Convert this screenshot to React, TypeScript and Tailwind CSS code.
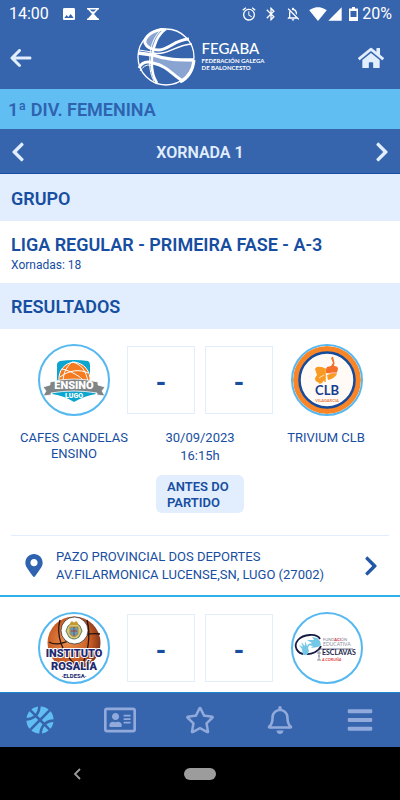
import type { ReactNode } from "react";
import {
  FaBars,
  FaBasketballBall,
  FaChevronLeft,
  FaChevronRight,
  FaHome,
  FaMapMarkerAlt,
  FaRegAddressCard,
  FaRegBell,
  FaRegStar,
} from "react-icons/fa";
import { FaArrowLeft } from "react-icons/fa6";
import {
  MdAlarm,
  MdBluetooth,
  MdImage,
  MdOutlineNotificationsOff,
  MdSignalCellular4Bar,
  MdSignalWifi4Bar,
} from "react-icons/md";

type Equipo = {
  nome: string;
  escudo: ReactNode;
};

type Partido = {
  id: number;
  local: Equipo;
  visitante: Equipo;
  data: string;
  hora: string;
  estado: string;
  pavillon: string;
  enderezo: string;
};

function FegabaLogo() {
  return (
    <div className="flex items-start gap-1.5" role="img" aria-label="FEGABA">
      <svg viewBox="0 2 60 60" className="h-[60px] w-[60px]" fill="none" stroke="#fff">
        <path d="M10 15C13 8 19 4 27 2C23 8 20 15 19 23C14 22 10 19 10 15Z" fill="#8aa4d2" stroke="none" />
        <path d="M17 30C28 34 43 36 57 35C57 44 52 53 44 56C38 46 30 38 17 37Z" fill="#8aa4d2" stroke="none" />
        <circle cx="30" cy="31" r="28" strokeWidth="1.3" />
        <path d="M28 3C14 5 8 12 9 17C11 22 17 24 23 24C34 23 38 14 53 13" strokeWidth="3" />
        <path d="M17 27C31 30 39 19 56 18" strokeWidth="1.5" />
        <path d="M30 3C22 8 17 20 16 31C15 42 17 51 21 57" strokeWidth="2.6" />
        <path d="M26 3C19 9 15 18 14 28C13 40 14 48 18 55" strokeWidth="1" />
        <path d="M2 27L17 29C31 34 42 34 58 34" strokeWidth="3.4" />
        <path d="M3 24L16 26" strokeWidth="1" />
        <path d="M3 42C6 36 11 35 17 37C32 40 37 50 47 55" strokeWidth="3" />
        <path d="M4 45C8 39 12 38 16 40" strokeWidth="1" />
        <path d="M44 56C52 52 57 44 58 34" strokeWidth="3" />
      </svg>
      <div className="pt-[11px] font-['Lato'] text-white">
        <p className="text-[15px] leading-[18px] font-medium">FEGABA</p>
        <p className="text-[6px] leading-[7px] font-bold">
          FEDERACIÓN GALEGA
          <br />
          DE BALONCESTO
        </p>
      </div>
    </div>
  );
}

function EscudoEnsino() {
  return (
    <svg viewBox="2 2 68 68" className="h-full w-full" role="img" aria-label="Ensino Lugo">
      <path d="M22 17Q36 15 50 17Q52 18 52 21V42L58 50Q46 52 36 58Q27 52 14 50L19 42V21Q19 18 22 17Z" fill="#0ba5cf" />
      <path d="M21 37C20 26 27 19 36 18C46 19 53 27 52 38Z" fill="#f47b20" stroke="#fff" />
      <path d="M24 25C33 27 42 32 47 38M22 33C31 26 42 25 50 29M34 18C27 24 25 31 25 39M34 18C43 20 48 26 50 38" fill="none" stroke="#fff" />
      <path d="M5 43L12 41V38Q36 32 60 38V41L67 43L64 47L67 52L59 51V49Q36 45 13 49V51L5 52L8 47Z" fill="#7f8587" stroke="#fff" strokeWidth=".8" />
      <text x="36" y="45" textAnchor="middle" className="fill-white font-['Roboto'] text-[11px] font-black">ENSINO</text>
      <text x="36" y="54" textAnchor="middle" className="fill-white font-['Roboto'] text-[7px] font-black">LUGO</text>
    </svg>
  );
}

function EscudoClb() {
  return (
    <svg viewBox="2 2 68 68" className="h-full w-full" role="img" aria-label="CLB Vilagarcía">
      <circle cx="36" cy="36" r="31" fill="#fffaf6" stroke="#fa8526" strokeWidth="6" />
      <circle cx="36" cy="36" r="27.500" fill="none" stroke="#164b9c" strokeWidth="2.500" />
      <path d="M40 22L42 19L40 14L42 12.500L43.500 19L43 22Q47 22 47 25L45.500 30Q40 31 35 29Q34 26 36 23Z" fill="#f4702a" />
      <path d="M24 25Q25 22 30 23Q34 23 34 27V35L31 39Q28 41 27 38Q24 38 24 34L26 31Z" fill="#f99a22" />
      <path d="M36 31Q40 29 46 30Q43 35 37 36Z" fill="#f99a22" />
      <path d="M28 34Q36 28 47 29" fill="none" stroke="#fff" strokeWidth=".7" />
      <path d="M34 24V38" stroke="#f99a22" strokeWidth="1.500" />
      <text x="36" y="51" textAnchor="middle" className="fill-[#173d90] font-['Lato'] text-[13px] font-bold">CLB</text>
      <text x="36" y="58" textAnchor="middle" className="fill-[#e97a3e] font-['Lato'] text-[4px] font-bold">VILAGARCIA</text>
    </svg>
  );
}

function EscudoRosalia() {
  return (
    <svg viewBox="2 2 68 68" className="h-full w-full" role="img" aria-label="Instituto Rosalía">
      <defs>
        <radialGradient id="balon" cx="40%" cy="45%" r="60%">
          <stop offset="0" stopColor="#ee9150" />
          <stop offset=".7" stopColor="#c65b23" />
          <stop offset="1" stopColor="#83361a" />
        </radialGradient>
      </defs>
      <circle cx="36" cy="31" r="26.500" fill="url(#balon)" />
      <path d="M22 8C18 22 23 41 39 54M11 30C24 38 40 19 62 22M49 8C53 24 50 41 44 53" fill="none" stroke="#24140f" strokeWidth="1.300" />
      <circle cx="36.500" cy="18.500" r="13.500" fill="#fff" stroke="#222" strokeWidth=".7" />
      <path d="M30 14Q36 8 42 14L44 19L41 25Q36 29 31 25L28 19Z" fill="#d6c77d" stroke="#5d7b55" />
      <path d="M32 15H40V22Q36 27 32 22Z" fill="#5e9dc6" stroke="#b18b2c" />
      <path d="M32 11L34 9L36 11L38 9L40 11V13H32Z" fill="#c49a31" />
      <path d="M36 15V24M33 19H39" stroke="#a34236" />
      <text x="36" y="45" textAnchor="middle" stroke="#fff" strokeWidth="2" paintOrder="stroke" className="fill-[#20296f] font-['Roboto'] text-[11px] font-black">INSTITUTO</text>
      <text x="36" y="58" textAnchor="middle" stroke="#fff" strokeWidth="2" paintOrder="stroke" className="fill-[#20296f] font-['Roboto'] text-[11px] font-black">ROSALÍA</text>
      <text x="36" y="66" textAnchor="middle" className="fill-[#20296f] font-['Roboto'] text-[6px] font-bold">·ELDESA·</text>
    </svg>
  );
}

function EscudoEsclavas() {
  return (
    <svg viewBox="2 2 68 68" className="h-full w-full" role="img" aria-label="Fundación Educativa Esclavas">
      <path d="M29 27C26 21 12 22 7 28C2 34 6 42 14 42C21 43 28 39 30 34" fill="none" stroke="#171c42" strokeWidth="1.800" />
      <path d="M12 43L11 37L8 33L12 35L10 30L14 34L14 29L16 34L19 31L17 36L18 39L16 43Z" fill="#74c8e5" />
      <path d="M29 29L26 26L21 25L23 28L16 28L21 31L16 33L22 34L20 36L27 35L30 33Z" fill="#74c8e5" />
      <path d="M28 38V48M26 41H30M27 44H29M26 48H30" stroke="#8b90a2" fill="none" />
      <path d="M27 37H62" stroke="#30345a" strokeWidth=".7" />
      <text x="32" y="29" className="fill-[#77798a] font-['Lato'] text-[4px]">
        FUND<tspan className="fill-[#d82739] font-bold">ACI</tspan>ÓN
      </text>
      <text x="32" y="34" className="fill-[#8b8e9c] font-['Lato'] text-[5px]">EDUCATIVA</text>
      <text x="31" y="43" className="fill-[#22264b] font-['Lato'] text-[7px] font-bold">ESCLAVAS</text>
      <text x="31" y="49" className="fill-[#df423f] font-['Lato'] text-[4px] font-bold italic">A CORUÑA</text>
    </svg>
  );
}

const partidos: Partido[] = [
  {
    id: 1,
    local: { nome: "CAFES CANDELAS ENSINO", escudo: <EscudoEnsino /> },
    visitante: { nome: "TRIVIUM CLB", escudo: <EscudoClb /> },
    data: "30/09/2023",
    hora: "16:15h",
    estado: "ANTES DO PARTIDO",
    pavillon: "PAZO PROVINCIAL DOS DEPORTES",
    enderezo: "AV.FILARMONICA LUCENSE,SN, LUGO (27002)",
  },
];

function Escudo({ children }: { children: ReactNode }) {
  return (
    <div className="h-[72px] w-[72px] justify-self-center overflow-hidden rounded-full border-2 border-[#55b8f0] bg-white">
      {children}
    </div>
  );
}

function Marcador({ local, visitante }: { local: ReactNode; visitante: ReactNode }) {
  return (
    <div className="grid grid-cols-[1fr_auto_1fr] items-center px-5 pt-[15px]">
      <Escudo>{local}</Escudo>
      <div className="flex gap-2.5 text-[26px] font-extrabold">
        <span className="flex h-[68px] w-[68px] items-center justify-center border border-[#e2eefd] pt-1">-</span>
        <span className="flex h-[68px] w-[68px] items-center justify-center border border-[#e2eefd] pt-1">-</span>
      </div>
      <Escudo>{visitante}</Escudo>
    </div>
  );
}

function TarxetaPartido({ partido }: { partido: Partido }) {
  return (
    <article className="border-b-2 border-[#2eb0ea]">
      <Marcador local={partido.local.escudo} visitante={partido.visitante.escudo} />
      <div className="grid grid-cols-3 px-[11px] pt-[13px] text-center text-[13px] leading-4">
        <p className="px-1 pt-px">{partido.local.nome}</p>
        <p className="leading-[18px]">
          {partido.data}
          <br />
          {partido.hora}
        </p>
        <p className="px-1 pt-px">{partido.visitante.nome}</p>
      </div>
      <p className="mx-auto mt-2.5 w-[88px] rounded-md bg-[#e2eefd] pt-1 pb-0.5 pl-[11px] text-[13px] leading-4 font-semibold">
        {partido.estado}
      </p>
      <a href="#pavillon" className="mx-[11px] mt-[22px] flex h-[60px] items-center border-t border-[#e2eefd] pr-2.5 pl-[11px]">
        <FaMapMarkerAlt className="h-[23px] w-6 text-[#2f62af]" />
        <span className="ml-2.5 flex-1 pt-px text-[13px] leading-[18px]">
          {partido.pavillon}
          <br />
          {partido.enderezo}
        </span>
        <FaChevronRight className="h-[22px] w-4 text-[#2457a5]" />
      </a>
    </article>
  );
}

function BarraEstado() {
  return (
    <div className="flex h-7 items-center justify-between pr-2 pl-[9px] text-white">
      <div className="flex items-center">
        <span className="text-base">14:00</span>
        <MdImage className="ml-3 h-4 w-4" />
        <svg viewBox="0 0 12 12" className="ml-2.5 h-3 w-3" fill="none" stroke="currentColor" strokeWidth="1.500">
          <path d="M0 .8H12M0 11.200H12M1.500 1L10.500 11M10.500 1L1.500 11" />
          <path d="M6 6L10.500 11H1.500ZM4 3.500H8L6 6Z" fill="currentColor" stroke="none" />
        </svg>
      </div>
      <div className="flex items-center">
        <MdAlarm className="h-4 w-4" />
        <MdBluetooth className="ml-1.5 h-4 w-4" />
        <MdOutlineNotificationsOff className="ml-1.5 h-4 w-4" />
        <MdSignalWifi4Bar className="ml-2 h-[18px] w-[18px]" />
        <MdSignalCellular4Bar className="h-4 w-4" />
        <svg viewBox="0 0 9 14" className="ml-1.5 h-3.5 w-[9px]">
          <path d="M3 0H6V1.500H9V14H0V1.500H3ZM1.500 4V10H7.500V4Z" fill="currentColor" fillRule="evenodd" />
        </svg>
        <span className="ml-1 text-base">20%</span>
      </div>
    </div>
  );
}

export default function App() {
  return (
    <div className="flex h-screen flex-col bg-white font-['Roboto',sans-serif] text-[#174ea1]">
      <header className="bg-[#3665ae]">
        <BarraEstado />
        <div className="flex h-[61px] items-start justify-between pr-4 pl-2.5 text-[#e2eefd]">
          <button type="button" aria-label="Volver" className="w-[26px] pt-[18px]">
            <FaArrowLeft className="h-6 w-[22px]" />
          </button>
          <div className="pl-1.5">
            <FegabaLogo />
          </div>
          <button type="button" aria-label="Inicio" className="pt-[18px]">
            <FaHome className="h-6 w-[26px]" />
          </button>
        </div>
      </header>

      <main className="flex-1 overflow-hidden">
        <h1 className="flex h-10 items-center bg-[#61bef3] px-2 pt-0.5 text-lg font-semibold text-[#2f62af]">
          1ª DIV. FEMENINA
        </h1>
        <div className="flex h-[45px] items-center justify-between border-b border-[#174ea1] bg-[#3665ae] px-2.5 pt-0.5 text-[#e2eefd]">
          <button type="button" aria-label="Xornada anterior">
            <FaChevronLeft className="h-[22px] w-4" />
          </button>
          <h2 className="pt-0.5 text-base font-semibold">XORNADA 1</h2>
          <button type="button" aria-label="Xornada seguinte">
            <FaChevronRight className="h-[22px] w-4" />
          </button>
        </div>

        <h2 className="flex h-[47px] items-center bg-[#e2eefd] px-[11px] pt-0.5 text-lg font-semibold">GRUPO</h2>
        <section className="h-[62px] px-[11px] pt-[13px]">
          <h3 className="text-lg leading-[22px] font-semibold">LIGA REGULAR - PRIMEIRA FASE - A-3</h3>
          <p className="text-xs leading-[18px]">Xornadas: 18</p>
        </section>
        <h2 className="flex h-[46px] items-center bg-[#e2eefd] px-[11px] pt-0.5 text-lg font-semibold">RESULTADOS</h2>

        {partidos.map((partido) => (
          <TarxetaPartido key={partido.id} partido={partido} />
        ))}
        <Marcador local={<EscudoRosalia />} visitante={<EscudoEsclavas />} />
      </main>

      <nav className="grid h-[55px] grid-cols-5 items-center justify-items-center border-t border-[#1c86cc] bg-[#3665ae] text-[#91aadb]">
        <button type="button" aria-label="Competicións" className="text-[#61bef3]">
          <FaBasketballBall className="h-7 w-7" />
        </button>
        <button type="button" aria-label="Carné">
          <FaRegAddressCard className="h-8 w-8" />
        </button>
        <button type="button" aria-label="Favoritos">
          <FaRegStar className="h-[30px] w-[30px]" />
        </button>
        <button type="button" aria-label="Notificacións">
          <FaRegBell className="h-7 w-7" />
        </button>
        <button type="button" aria-label="Menú">
          <FaBars className="h-7 w-7" />
        </button>
      </nav>

      <div className="grid h-[53px] grid-cols-5 items-center bg-black text-[#9c9c9c]">
        <button type="button" aria-label="Atrás" className="col-start-1 col-end-3 justify-self-center pr-1.5">
          <svg viewBox="0 0 8 12" className="h-3 w-2" fill="none" stroke="currentColor" strokeWidth="1.800">
            <path d="M7 1L2 6L7 11" />
          </svg>
        </button>
        <button type="button" aria-label="Pantalla de inicio" className="h-3 w-8 justify-self-center rounded-full bg-[#9c9c9c]" />
      </div>
    </div>
  );
}
